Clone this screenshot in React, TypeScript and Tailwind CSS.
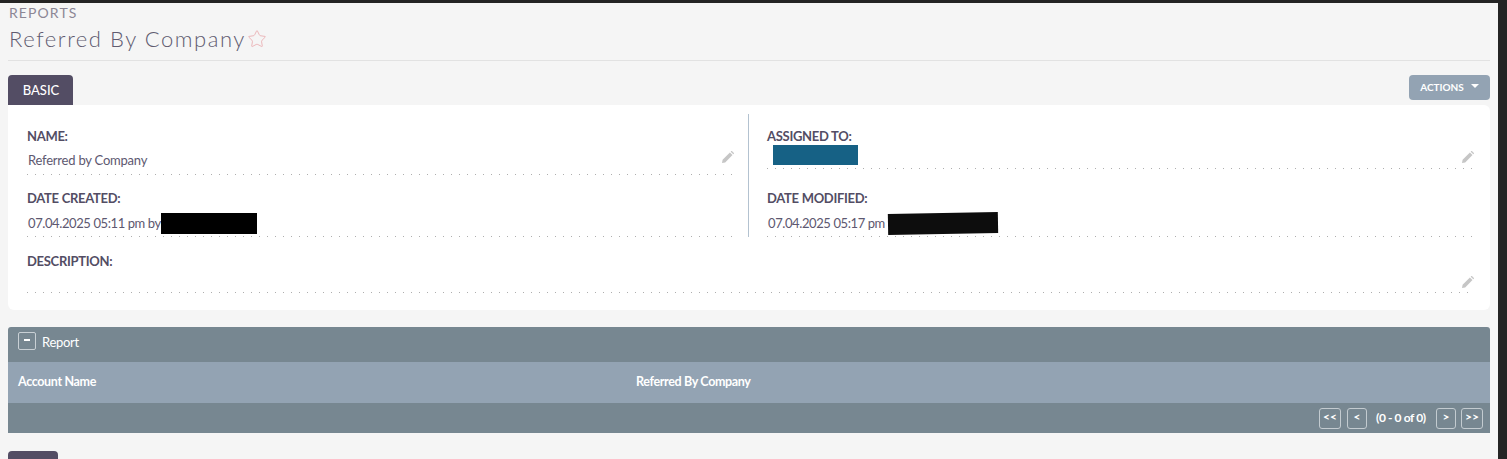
import { Star } from "lucide-react";
import type { ReactNode } from "react";

const dots = "h-px bg-[linear-gradient(to_right,#aeaeae_1px,transparent_1px)] bg-[length:8px_1px]";

function PencilMark({ className = "" }: { className?: string }) {
  return (
    <svg viewBox="0 0 12 12" className={`h-3 w-3 shrink-0 text-[#c6c6c6] ${className}`} fill="currentColor">
      <path d="M0 12l.6-3.2L7.9 1.5l2.6 2.6-7.3 7.3L0 12zM8.7.7l.6-.6c.2-.1.4-.1.6 0l2 2c.1.2.1.4 0 .6l-.6.6L8.7.7z" />
    </svg>
  );
}

function Field({ label, children, pencil, labelGap, dotGap }: { label: string; children?: ReactNode; pencil?: string; labelGap: string; dotGap: string }) {
  return (
    <div>
      <div className="text-[13px] font-bold leading-4 tracking-[-0.3px] text-[#534d64]">{label}</div>
      <div className={`flex h-5 items-center justify-between pr-px ${labelGap}`}>
        <div className="flex min-w-0 items-center pl-px text-[13px] leading-5 tracking-[-0.22px] text-[#5d5870]">{children}</div>
        {pencil && <PencilMark className={pencil} />}
      </div>
      <div className={`${dots} ${dotGap}`} />
    </div>
  );
}

function PageButton({ label, wide }: { label: string; wide?: boolean }) {
  return (
    <button type="button" className={`flex h-[21px] items-center justify-center rounded-[3px] border border-[#c3cbd0] pb-0.5 text-[12px] font-bold leading-none text-white ${wide ? "w-[22px]" : "w-5"}`}>
      {label}
    </button>
  );
}

export default function App() {
  return (
    <div className="h-[459px] w-[1507px] overflow-hidden bg-[#f5f5f5] font-['Lato','Noto_Sans',sans-serif]">
      <div className="h-[3px] bg-[#242424]" />
      <div className="flex h-[456px]">
        <main className="min-w-0 flex-1 px-2">
          <div className="pl-px pt-[2px] text-[14px] leading-4 tracking-[1.1px] text-[#8c8795]">REPORTS</div>
          <div className="flex h-[39px] items-center pb-1 pl-px">
            <h1 className="text-[22px] font-light leading-7 tracking-[1.55px] text-[#605b70]">Referred By Company</h1>
            <Star className="ml-px h-5 w-5 text-[#e9abae]" strokeWidth={1} />
          </div>
          <div className="h-px bg-[#e2e2e2]" />

          <div className="mt-[14px] flex items-start justify-between">
            <div className="flex h-[30px] w-[65px] items-center justify-center rounded-t-[4px] bg-[#534d64] pl-px pt-px text-[13px] font-medium text-white">BASIC</div>
            <button type="button" className="flex h-[25px] w-[81px] items-center justify-center gap-[7px] rounded-[4px] bg-[#93a3b3] text-[10px] font-bold text-white">
              ACTIONS
              <span className="mb-[3px] h-0 w-0 border-x-[4px] border-t-[4px] border-x-transparent border-t-white" />
            </button>
          </div>

          <section className="h-[205px] rounded-b-[6px] rounded-tr-[6px] bg-white pt-[9px]">
            <div className="grid grid-cols-[741px_1fr]">
              <div className="border-r border-[#b3c2d0] pl-[19px] pr-[13px]">
                <div className="h-[61px] pt-[14px]">
                  <Field label="NAME:" pencil="-translate-y-[3px]" labelGap="mt-[6px]" dotGap="mt-[4px]">Referred by Company</Field>
                </div>
                <div className="h-[62px] pt-[15px]">
                  <Field label="DATE CREATED:" labelGap="mt-[7px]" dotGap="mt-[3px]">
                    <span className="tracking-[-0.4px]">07.04.2025 05:11 pm by</span>
                    <span className="-my-1 inline-block h-[21px] w-24 bg-black" />
                  </Field>
                </div>
              </div>
              <div className="pl-[18px] pr-[15px]">
                <div className="h-[61px] pt-[14px]">
                  <Field label="ASSIGNED TO:" pencil="translate-y-[3px]" labelGap="mt-0" dotGap="mt-[4px]">
                    <span className="ml-[5px] mt-[1px] inline-block h-5 w-[85px] bg-[#166185]" />
                  </Field>
                </div>
                <div className="h-[62px] pt-[15px]">
                  <Field label="DATE MODIFIED:" labelGap="mt-[7px]" dotGap="mt-[3px]">
                    <span className="tracking-[-0.4px]">07.04.2025 05:17 pm</span>
                    <span className="-my-1 ml-[3px] inline-block h-[21px] w-[110px] -rotate-1 bg-[#0d0d0d]" />
                  </Field>
                </div>
              </div>
            </div>
            <div className="pl-[19px] pr-[15px] pt-4">
              <div className="text-[13px] font-bold leading-4 tracking-[-0.3px] text-[#534d64]">DESCRIPTION:</div>
              <div className="mt-[7px] flex h-[14px] justify-end pr-px"><PencilMark /></div>
              <div className={`${dots} mt-[2px]`} />
            </div>
          </section>

          <section className="mt-[17px] overflow-hidden rounded-t-[3px] text-white">
            <div className="flex h-[35px] items-center gap-[6px] bg-[#778791] pb-1 pl-[10px]">
              <span className="mb-[3px] flex h-[18px] w-[18px] items-start justify-center rounded-[2px] border border-[#c9d0d5] pt-[6px]">
                <span className="h-0.5 w-1.5 bg-white" />
              </span>
              <span className="text-[13px] tracking-[-0.3px]">Report</span>
            </div>
            <div className="flex h-[41px] items-center bg-[#93a3b3] pl-[10px] text-[12.5px] font-bold tracking-[-0.35px]">
              <div className="w-[618px]">Account Name</div>
              <div>Referred By Company</div>
            </div>
            <div className="flex h-[30px] items-center justify-end bg-[#778791] pr-[7px]">
              <PageButton label="<<" wide />
              <div className="ml-[6px]"><PageButton label="<" /></div>
              <div className="ml-[9px] w-[51px] whitespace-nowrap text-[12px] font-bold tracking-[-0.4px]">(0 - 0 of 0)</div>
              <div className="ml-[9px]"><PageButton label=">" /></div>
              <div className="ml-[5px]"><PageButton label=">>" wide /></div>
            </div>
          </section>

          <div className="mt-[18px] h-10 w-[50px] rounded-t-[4px] bg-[#534d64]" />
        </main>
        <div className="w-[9px] shrink-0 bg-[#242424]" />
      </div>
    </div>
  );
}
